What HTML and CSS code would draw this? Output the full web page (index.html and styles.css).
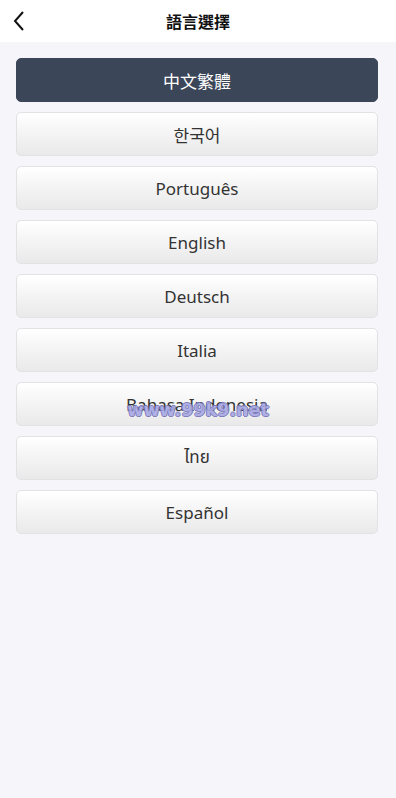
FILE: index.html
```html
<!DOCTYPE html>
<html lang="zh-TW">
<head>
    <meta charset="UTF-8">
    <meta name="viewport" content="width=device-width, initial-scale=1.0">
    <title>語言選擇</title>
    <link rel="stylesheet" href="styles.css">
</head>
<body>
    <header class="top-bar">
        <a class="back" href="#">
            <svg width="12" height="22" viewBox="0 0 12 22"><path d="M10 2 L2 11 L10 20" fill="none" stroke="#111" stroke-width="2"/></svg>
        </a>
        <h1>語言選擇</h1>
    </header>

    <ul class="lang-list">
        <li class="lang active">中文繁體</li>
        <li class="lang">한국어</li>
        <li class="lang">Português</li>
        <li class="lang">English</li>
        <li class="lang">Deutsch</li>
        <li class="lang">Italia</li>
        <li class="lang">Bahasa Indonesia</li>
        <li class="lang">ไทย</li>
        <li class="lang">Español</li>
    </ul>

    <div class="watermark">www.99k9.net</div>
</body>
</html>
```

FILE: styles.css
```css
* {
    margin: 0;
    padding: 0;
    box-sizing: border-box;
}

body {
    font-family: "Noto Sans", "Noto Sans CJK TC", "Noto Sans Thai", sans-serif;
    background: #f6f6fa;
    min-height: 100vh;
    position: relative;
}

.top-bar {
    height: 42px;
    background: #fff;
    display: flex;
    align-items: center;
    justify-content: center;
    position: relative;
}

.top-bar h1 {
    font-size: 16px;
    font-weight: bold;
    color: #111;
}

.back {
    position: absolute;
    left: 13px;
    top: 10px;
    display: flex;
}

.lang-list {
    list-style: none;
    padding: 16px 18px 0 16px;
    display: flex;
    flex-direction: column;
    gap: 10px;
}

.lang {
    height: 44px;
    display: flex;
    align-items: center;
    justify-content: center;
    font-size: 17px;
    color: #333;
    border: 1px solid #e2e2e4;
    border-radius: 5px;
    background: linear-gradient(to bottom, #ffffff 0%, #e9e9e9 100%);
}

.lang.active {
    background: #3c4659;
    border-color: #3c4659;
    color: #fff;
}

/* 水印 */
.watermark {
    position: absolute;
    top: 400px;
    left: 0;
    right: 0;
    text-align: center;
    font-family: "DejaVu Sans", sans-serif;
    font-weight: bold;
    font-size: 17.5px;
    color: #a9a9e4;
    opacity: 0.9;
    text-shadow: 1px 0 0 #7474b8, -1px 0 0 #7474b8, 0 1px 0 #7474b8, 0 -1px 0 #7474b8;
}
```
